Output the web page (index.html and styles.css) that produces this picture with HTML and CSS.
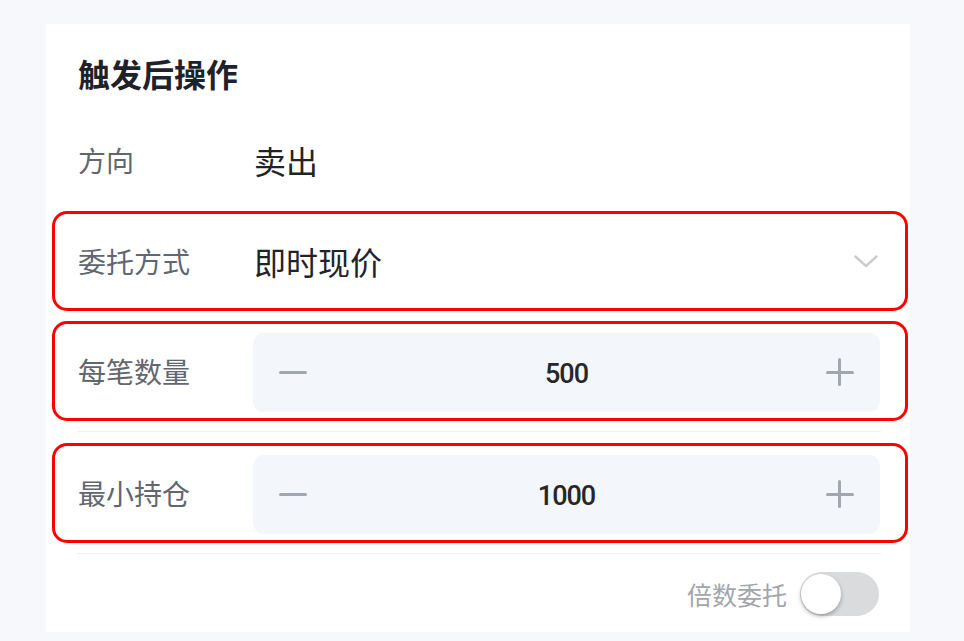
FILE: index.html
```html
<!DOCTYPE html>
<html lang="zh-CN">
<head>
<meta charset="utf-8">
<title>触发后操作</title>
<link rel="stylesheet" href="styles.css">
</head>
<body>
<div class="page">
  <div class="card">
    <div class="title">触发后操作</div>
    <div class="row plain">
      <div class="label">方向</div>
      <div class="value">卖出</div>
    </div>
    <div class="row boxed">
      <div class="label">委托方式</div>
      <div class="value grow">即时现价</div>
      <svg class="chevron" width="24" height="13" viewBox="0 0 24 13"><polyline points="1.5,1.5 12,11 22.5,1.5" fill="none" stroke="#cbcccf" stroke-width="2.4" stroke-linecap="round" stroke-linejoin="round"/></svg>
    </div>
    <div class="row boxed gap-small">
      <div class="label">每笔数量</div>
      <div class="stepper">
        <span class="btn minus"></span>
        <span class="num">500</span>
        <span class="btn plus"></span>
      </div>
    </div>
    <div class="divider"></div>
    <div class="row boxed">
      <div class="label">最小持仓</div>
      <div class="stepper">
        <span class="btn minus"></span>
        <span class="num">1000</span>
        <span class="btn plus"></span>
      </div>
    </div>
    <div class="divider"></div>
    <div class="toggle-row">
      <span class="toggle-label">倍数委托</span>
      <span class="switch"><span class="knob"></span></span>
    </div>
  </div>
</div>
</body>
</html>
```
FILE: styles.css
```css
* { box-sizing: border-box; }
html, body { margin: 0; padding: 0; }
body {
  background: #f7f8fc;
  font-family: "Noto Sans CJK SC", "Noto Sans", sans-serif;
  width: 964px;
  height: 641px;
  overflow: hidden;
}
.page {
  padding: 24px 54px 0 46px;
}
.card {
  background: #ffffff;
  width: 864px;
  height: 608px;
  padding: 27px 30px 15px 32px;
  display: flex;
  flex-direction: column;
}
.title {
  height: 44px;
  line-height: 44px;
  font-size: 32px;
  font-weight: 700;
  color: #1f2329;
}
.row {
  display: flex;
  align-items: center;
}
.plain {
  height: 60px;
  margin-top: 35px;
  margin-bottom: 21px;
}
.boxed {
  height: 100px;
  margin: 0 -28px 0 -26px;
  padding: 0 25px 0 23px;
  border: 3px solid #ff0000;
  border-radius: 15px;
}
.gap-small { margin-top: 10px; }
.label {
  width: 175px;
  flex: none;
  font-size: 28px;
  color: #62666e;
  line-height: 40px;
}
.value {
  font-size: 32px;
  color: #222326;
  line-height: 44px;
  padding-left: 1px;
}
.grow { flex: 1; }
.chevron { flex: none; margin-right: 2px; }
.stepper {
  flex: 1;
  height: 79px;
  margin-top: 2px;
  background: #f3f6fa;
  border-radius: 11px;
  display: flex;
  align-items: center;
  justify-content: space-between;
  padding: 0 26px;
}
.btn {
  position: relative;
  width: 28px;
  height: 28px;
  flex: none;
}
.btn::before, .plus::after {
  content: "";
  position: absolute;
  background: #a2a6ae;
  border-radius: 2px;
}
.btn::before {
  left: 0; right: 0; top: 12.5px; height: 3px;
}
.plus::after {
  top: 0; bottom: 0; left: 12.5px; width: 3px;
}
.num {
  font-family: Roboto, "Noto Sans", sans-serif;
  font-size: 27px;
  font-weight: 500;
  letter-spacing: -1px;
  color: #25272b;
  padding-top: 3px;
}
.divider {
  height: 1px;
  background: #eef0f3;
  margin: 10px -1px 11px -1px;
}
.toggle-row {
  margin-top: 7px;
  height: 44px;
  display: flex;
  justify-content: flex-end;
  align-items: center;
  gap: 13px;
}
.toggle-label {
  font-size: 25px;
  color: #a2a5ab;
}
.switch {
  position: relative;
  width: 79px;
  height: 44px;
  border-radius: 22px;
  background: #dadbdd;
  margin-right: 1px;
}
.knob {
  position: absolute;
  left: 1px;
  top: 2px;
  width: 40px;
  height: 40px;
  border-radius: 50%;
  background: #ffffff;
  box-shadow: 0 2px 4px rgba(0,0,0,0.3);
}
```
